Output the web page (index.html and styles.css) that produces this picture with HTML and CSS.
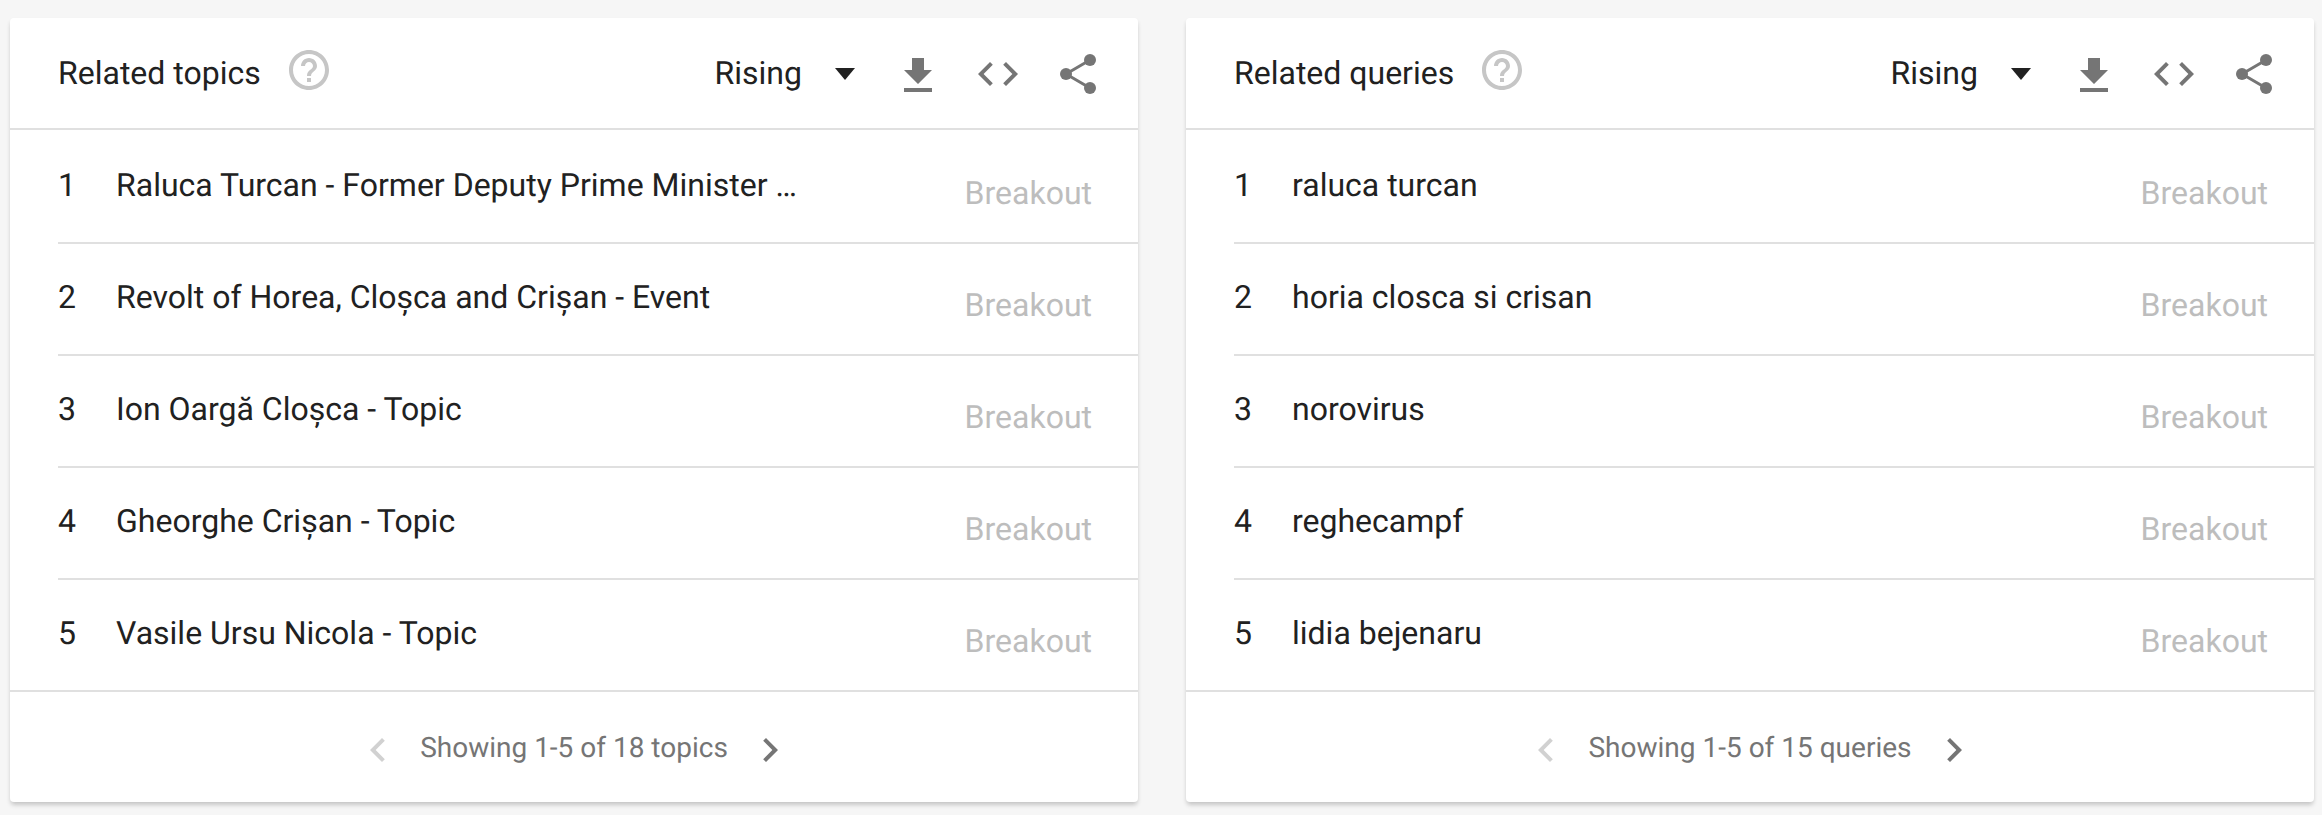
FILE: index.html
```html
<!DOCTYPE html>
<html lang="en">
<head>
<meta charset="utf-8">
<title>Related topics and queries</title>
<link rel="stylesheet" href="styles.css">
</head>
<body>
<svg class="sprite" aria-hidden="true">
  <symbol id="help" viewBox="0 0 24 24"><path d="M11 18h2v-2h-2v2zm1-16C6.480 2 2 6.480 2 12s4.480 10 10 10 10-4.480 10-10S17.520 2 12 2zm0 18c-4.410 0-8-3.590-8-8s3.590-8 8-8 8 3.590 8 8-3.590 8-8 8zm0-14c-2.210 0-4 1.790-4 4h2c0-1.100.9-2 2-2s2 .9 2 2c0 2-3 1.750-3 5h2c0-2.250 3-2.500 3-5 0-2.210-1.790-4-4-4z"/></symbol>
  <symbol id="download" viewBox="0 0 24 24"><path d="M19 9h-4V3H9v6H5l7 7 7-7zM5 18v2h14v-2H5z"/></symbol>
  <symbol id="code" viewBox="0 0 24 24"><path d="M9.400 16.600L4.800 12l4.600-4.600L8 6l-6 6 6 6 1.400-1.400zm5.200 0l4.600-4.600-4.600-4.600L16 6l6 6-6 6-1.400-1.400z"/></symbol>
  <symbol id="share" viewBox="0 0 24 24"><path d="M6 12L18 5M6 12l12 7" fill="none" stroke="currentColor" stroke-width="1.500"/><circle cx="6" cy="12" r="3"/><circle cx="18" cy="5" r="3"/><circle cx="18" cy="19" r="3"/></symbol>
  <symbol id="prev" viewBox="0 0 24 24"><path d="M15.410 7.410L14 6l-6 6 6 6 1.410-1.410L10.830 12z"/></symbol>
  <symbol id="next" viewBox="0 0 24 24"><path d="M10 6L8.590 7.410 13.170 12l-4.580 4.590L10 18l6-6z"/></symbol>
</svg>
<main class="board">
  <section class="card">
    <header class="head">
      <h2 class="title">Related topics</h2>
      <svg class="icon help"><use href="#help"/></svg>
      <div class="tools">
        <span class="sort">Rising</span>
        <svg class="caret" viewBox="0 0 20 12"><path d="M0 0h20L10 12z"/></svg>
        <svg class="icon download"><use href="#download"/></svg>
        <svg class="icon"><use href="#code"/></svg>
        <svg class="icon"><use href="#share"/></svg>
      </div>
    </header>
    <ol class="list">
      <li class="row"><span class="rank">1</span><span class="label">Raluca Turcan - Former Deputy Prime Minister …</span><span class="value">Breakout</span></li>
      <li class="row"><span class="rank">2</span><span class="label">Revolt of Horea, Cloșca and Crișan - Event</span><span class="value">Breakout</span></li>
      <li class="row"><span class="rank">3</span><span class="label">Ion Oargă Cloșca - Topic</span><span class="value">Breakout</span></li>
      <li class="row"><span class="rank">4</span><span class="label">Gheorghe Crișan - Topic</span><span class="value">Breakout</span></li>
      <li class="row"><span class="rank">5</span><span class="label">Vasile Ursu Nicola - Topic</span><span class="value">Breakout</span></li>
    </ol>
    <footer class="pager">
      <svg class="icon disabled"><use href="#prev"/></svg>
      <span class="range">Showing 1-5 of 18 topics</span>
      <svg class="icon"><use href="#next"/></svg>
    </footer>
  </section>
  <section class="card">
    <header class="head">
      <h2 class="title">Related queries</h2>
      <svg class="icon help"><use href="#help"/></svg>
      <div class="tools">
        <span class="sort">Rising</span>
        <svg class="caret" viewBox="0 0 20 12"><path d="M0 0h20L10 12z"/></svg>
        <svg class="icon download"><use href="#download"/></svg>
        <svg class="icon"><use href="#code"/></svg>
        <svg class="icon"><use href="#share"/></svg>
      </div>
    </header>
    <ol class="list">
      <li class="row"><span class="rank">1</span><span class="label">raluca turcan</span><span class="value">Breakout</span></li>
      <li class="row"><span class="rank">2</span><span class="label">horia closca si crisan</span><span class="value">Breakout</span></li>
      <li class="row"><span class="rank">3</span><span class="label">norovirus</span><span class="value">Breakout</span></li>
      <li class="row"><span class="rank">4</span><span class="label">reghecampf</span><span class="value">Breakout</span></li>
      <li class="row"><span class="rank">5</span><span class="label">lidia bejenaru</span><span class="value">Breakout</span></li>
    </ol>
    <footer class="pager">
      <svg class="icon disabled"><use href="#prev"/></svg>
      <span class="range">Showing 1-5 of 15 queries</span>
      <svg class="icon"><use href="#next"/></svg>
    </footer>
  </section>
</main>
</body>
</html>
```
FILE: styles.css
```css
* { box-sizing: border-box; }
body {
  margin: 0;
  background: #f6f6f6;
  color: #212121;
  font: 32px/40px Roboto, "Noto Sans", sans-serif;
  text-rendering: geometricPrecision;
  overflow: hidden;
}
.sprite { display: none; }
.board {
  display: grid;
  grid-template-columns: 1128px 1128px;
  gap: 48px;
  height: 815px;
  padding: 18px 8px 13px 10px;
}
.card {
  display: flex;
  flex-direction: column;
  background: #fff;
  border-radius: 4px;
  box-shadow: 0 4px 5px -1px rgba(0, 0, 0, .16), 0 2px 4px rgba(0, 0, 0, .06);
}
.head {
  display: flex;
  align-items: flex-start;
  height: 112px;
  padding: 32px 36px 0 48px;
  border-bottom: 2px solid #e0e0e0;
}
.title {
  margin: 3px 24px 0 0;
  font-size: 32px;
  font-weight: 400;
}
.icon {
  flex: none;
  width: 48px;
  height: 48px;
  fill: currentColor;
  color: #757575;
}
.help { margin-top: -4px; color: #c6c6c6; }
.tools { display: flex; margin-left: auto; gap: 32px; }
.sort { margin-top: 3px; }
.caret { width: 20px; height: 12px; margin: 18px 7px 0 1px; fill: #212121; }
.download { margin-top: 2px; }
.list { margin: 0; padding: 2px 0 0; list-style: none; border-bottom: 2px solid #e0e0e0; }
.row {
  display: flex;
  align-items: flex-start;
  height: 112px;
  margin-left: 48px;
  padding: 33px 46px 0 0;
  border-bottom: 2px solid #e0e0e0;
}
.row:last-child { height: 110px; border: 0; }
.rank { width: 58px; }
.label { flex: 1; white-space: nowrap; }
.value { margin-top: 8px; color: #bdbdbd; }
.pager {
  display: flex;
  flex: 1;
  align-items: center;
  justify-content: center;
  gap: 18px;
  padding-top: 6px;
  color: #757575;
  font-size: 28px;
}
.range { margin-top: -4px; }
.pager .disabled { color: #d1d1d1; }
```
